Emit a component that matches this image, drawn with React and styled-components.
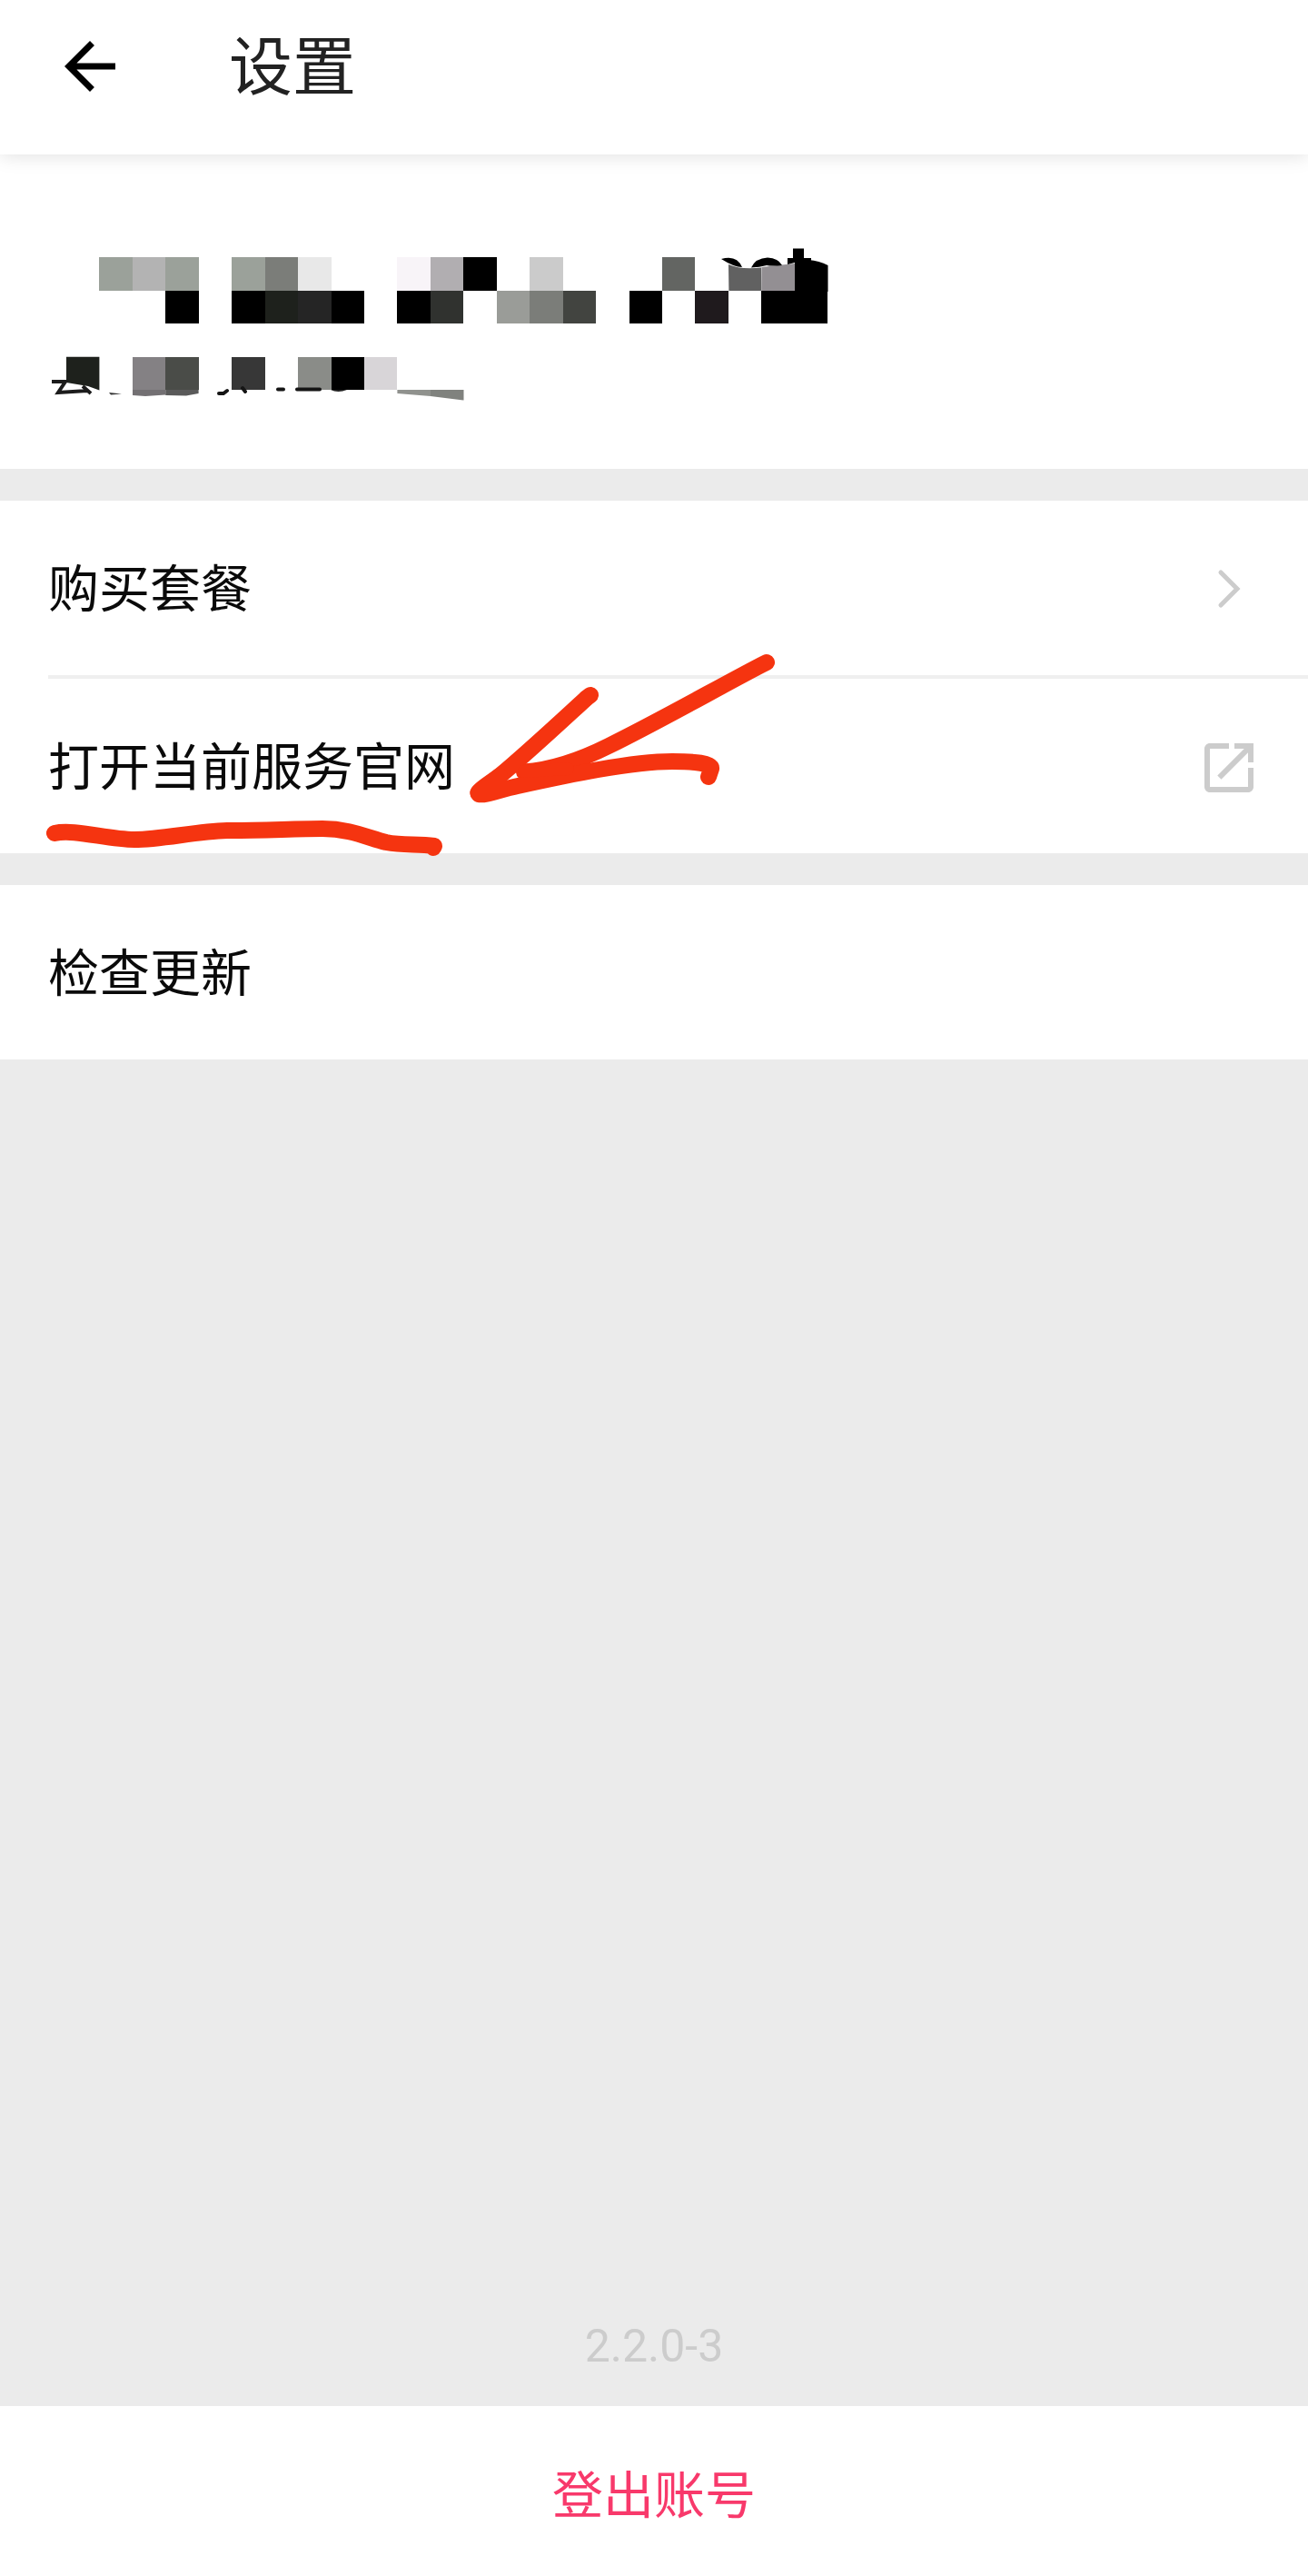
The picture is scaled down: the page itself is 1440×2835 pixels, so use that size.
import React from "react";
import styled, { createGlobalStyle } from "styled-components";

const GlobalStyle = createGlobalStyle`
  *, *::before, *::after { box-sizing: border-box; }
  body {
    margin: 0;
    background: #ebebeb;
    font-family: Roboto, "Noto Sans CJK SC", sans-serif;
    color: #0a0a0a;
  }
`;

const Page = styled.div`
  display: flex;
  flex-direction: column;
  min-height: 100vh;
`;

const Header = styled.header`
  position: relative;
  z-index: 1;
  display: flex;
  align-items: center;
  gap: 111px;
  height: 170px;
  padding: 0 57px 24px;
  background: #fff;
  box-shadow: 0 1px 20px rgba(0, 0, 0, 0.13);
`;

const BackButton = styled.button`
  display: flex;
  padding: 0;
  border: 0;
  background: none;
  color: #000;
  cursor: pointer;
`;

const Icon = styled.svg`
  display: block;
  flex: none;
  width: ${(p) => p.$size}px;
  height: ${(p) => p.$size}px;
  fill: currentColor;
`;

const Title = styled.h1`
  margin: 0;
  padding-top: 4px;
  font-size: 70px;
  line-height: 80px;
  font-weight: 400;
  color: #222;
`;

const Main = styled.main`
  display: flex;
  flex: 1;
  flex-direction: column;
  gap: 35px;
`;

const Profile = styled.section`
  height: 346px;
  padding: 94px 54px 0;
  background: #fff;
`;

const Mosaic = styled.svg`
  display: block;
  width: 864px;
  height: 180px;
`;

const Group = styled.nav`
  background: #fff;
`;

const Item = styled.div`
  position: relative;
  margin-left: 53px;

  & + & {
    border-top: 4px solid #efefef;
  }
`;

const Row = styled.a`
  display: flex;
  align-items: center;
  justify-content: space-between;
  width: 100%;
  height: 192px;
  padding: 4px 51px 0 0;
  border: 0;
  background: none;
  color: inherit;
  font: inherit;
  font-size: 56px;
  line-height: 80px;
  text-align: left;
  text-decoration: none;
  cursor: pointer;

  svg { color: #ccc; }
`;

const Annotation = styled.svg`
  position: absolute;
  left: -13px;
  top: -41px;
  width: 820px;
  height: 250px;
  pointer-events: none;
  fill: none;
  stroke: #f53410;
  stroke-width: 18px;
  stroke-linecap: round;
  stroke-linejoin: round;
`;

const Version = styled.p`
  margin: auto 0 36px;
  font-size: 50px;
  line-height: 60px;
  text-align: center;
  color: #ccc;
`;

const LogoutButton = styled.button`
  height: 187px;
  padding: 10px 0 0;
  border: 0;
  background: #fff;
  color: #f8396b;
  font: inherit;
  font-size: 56px;
  line-height: 80px;
  cursor: pointer;
`;

const CELL = 36.45;
const NAME_TOP = 283.3;
const PLAN_TOP = 392.7;

// [column, row, colour]
const nameCells = [
  [3, 0, "#9ba19a"], [4, 0, "#b3b3b3"], [5, 0, "#9ba19a"],
  [7, 0, "#9ba19a"], [8, 0, "#7b7d79"], [9, 0, "#e8e8e8"],
  [12, 0, "#f8f4f8"], [13, 0, "#b1aeb1"], [14, 0, "#000"],
  [16, 0, "#cbcbcb"], [20, 0, "#636562"],
  [5, 1, "#000"], [7, 1, "#000"], [8, 1, "#1e211c"], [9, 1, "#252525"],
  [10, 1, "#000"], [12, 1, "#000"], [13, 1, "#30322f"],
  [15, 1, "#9a9c98"], [16, 1, "#7b7d79"], [17, 1, "#424440"],
  [19, 1, "#000"], [21, 1, "#1f1a1d"], [23, 1, "#000"], [24, 1, "#000"],
];

const planCells = [
  [4, "#848184"], [5, "#4a4c48"], [7, "#373737"],
  [9, "#8a8c88"], [10, "#000"], [11, "#d8d5d8"],
];

function Redaction() {
  return (
    <Mosaic viewBox="54 264 864 180" aria-hidden="true">
      <g shapeRendering="crispEdges">
        {nameCells.map(([col, row, fill]) => (
          <rect key={`${col}-${row}`} x={col * CELL} y={NAME_TOP + row * CELL} width={CELL} height={CELL} fill={fill} />
        ))}
        {planCells.map(([col, fill]) => (
          <rect key={col} x={col * CELL} y={PLAN_TOP} width={CELL} height={CELL} fill={fill} />
        ))}
      </g>
      {/* uneven upper edge of the covered name */}
      <path d="M802 291Q815 297 838 294.500L838.400 320H802.400Z" fill="#616161" />
      <path d="M838.400 294L856 292L875 290V320H838.400Z" fill="#938f93" />
      <path d="M875 286H890Q902 287 911.500 292V321H875Z" fill="#000" />
      <path d="M794 285Q811 280 817 294Q808 294 794 285Z" fill="#000" />
      <path d="M827 294.500Q832 284 845 283.500Q857 284 861 292Q850 293 844 292Q836 294 827 294.500Z" fill="#000" />
      <path d="M873 273.500H885V284H893V289H875L867 291V284H873Z" fill="#000" />
      {/* uneven lower edge of the covered line */}
      <path d="M73 392.700H109.400V429.500L97 425L73 421Z" fill="#1e211c" />
      <path d="M57 420H72L64 432L96 430M91 425L100 433" fill="none" stroke="#1c1c1c" strokeWidth="4" />
      <path d="M120 432L134 433.500L122 434.500Z" fill="#333" />
      <path d="M146 429H182.200V434.500L160 436L146 435Z" fill="#737073" />
      <path d="M182.200 429H218.600V433L205 435.500L182.200 435Z" fill="#5a5a5a" />
      <path d="M241 433H246L250 430M267 427L270 431M306 428.500H312M327 428.500H352" fill="none" stroke="#151515" strokeWidth="4" strokeLinecap="round" />
      <path d="M364 429H382Q372 433 364 429Z" fill="#222" />
      <path d="M437.400 429H474V436L437.400 433Z" fill="#90928e" />
      <path d="M474 429H510.500V440.500L474 436Z" fill="#80827e" />
    </Mosaic>
  );
}

function HandDrawnMarks() {
  return (
    <Annotation viewBox="40 706 820 250" aria-hidden="true">
      <path d="M60 917C82 912 118 924 148 924C178 924 215 915 250 914C290 914 325 912 355 912C385 912 405 922 425 927C445 931 460 928 478 931L477 933" />
      <path d="M844 729L838 732C790 757 725 794 670 821C640 836 610 847 577 849.500" />
      <path d="M650 765L646 768C610 801 580 829 550 854C535 866 524 874 527 872" />
      <path d="M550 854C538 863 524 871 527 874C534 876 550 869 570 865C625 853 695 838 740 838C765 838 784 840 783 846L780 855" />
      <path d="M577 849L625 846" strokeWidth="14" />
    </Annotation>
  );
}

export default function App() {
  return (
    <Page>
      <GlobalStyle />
      <Header>
        <BackButton type="button" aria-label="返回">
          <Icon $size={84} viewBox="0 0 24 24">
            <path d="M20 11H7.830l5.590-5.590L12 4l-8 8 8 8 1.410-1.410L7.830 13H20v-2z" />
          </Icon>
        </BackButton>
        <Title>设置</Title>
      </Header>
      <Main>
        <Profile>
          <Redaction />
        </Profile>
        <Group>
          <Item>
            <Row href="#plans">
              购买套餐
              <Icon $size={72} viewBox="0 0 72 72">
                <path d="M27 17L45 35L27 53" fill="none" stroke="currentColor" strokeWidth="5" strokeLinecap="round" />
              </Icon>
            </Row>
          </Item>
          <Item>
            <Row href="#website">
              打开当前服务官网
              <Icon $size={72} viewBox="0 0 24 24">
                <path d="M19 19H5V5h7V3H5c-1.110 0-2 .9-2 2v14c0 1.100.890 2 2 2h14c1.100 0 2-.9 2-2v-7h-2v7zM14 3v2h3.590l-9.830 9.830 1.410 1.410L19 6.410V10h2V3h-7z" />
              </Icon>
            </Row>
            <HandDrawnMarks />
          </Item>
        </Group>
        <Group>
          <Item>
            <Row as="button" type="button">检查更新</Row>
          </Item>
        </Group>
        <Version>2.2.0-3</Version>
      </Main>
      <LogoutButton type="button">登出账号</LogoutButton>
    </Page>
  );
}
